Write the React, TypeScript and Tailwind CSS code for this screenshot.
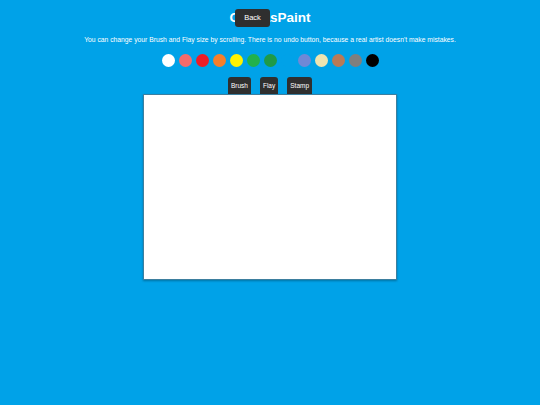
import React from "react";

const colors = [
  "#ffffff",
  "#f56b6b",
  "#ec1c27",
  "#f77f2a",
  "#fff200",
  "#22b14c",
  "#1f9a47",
  "#00a2e8",
  "#7088d6",
  "#efe4b0",
  "#b97a57",
  "#7f7f7f",
  "#000000",
];

const tools = ["Brush", "Flay", "Stamp"];

const App = () => {
  return (
    <div
      className="relative w-[540px] h-[405px] bg-[#00a2e8] flex flex-col items-center text-white"
      style={{ fontFamily: '"Liberation Sans", Arial, sans-serif' }}
    >
      <h1 className="mt-[9px] h-[18px] leading-[18px] text-[13.5px] font-bold">CanvasPaint</h1>

      {/* Back button sits over the title */}
      <button className="absolute left-[235px] top-[9px] w-[35px] h-[18px] rounded-[3px] bg-[#2f2f2f] text-[7.5px] font-normal text-white">
        Back
      </button>

      <p className="mt-[8px] text-[6.75px] leading-[10px]">
        You can change your Brush and Flay size by scrolling. There is no undo button, because a real artist doesn't make mistakes.
      </p>

      <div className="mt-[9px] flex gap-[4px]">
        {colors.map((c) => (
          <div key={c} className="w-[13px] h-[13px] rounded-full" style={{ backgroundColor: c }} />
        ))}
      </div>

      <div className="mt-[10px] flex gap-[9px]">
        {tools.map((t) => (
          <button
            key={t}
            className="h-[17px] px-[3px] rounded-t-[3px] bg-[#2f2f2f] text-[6.5px] font-normal text-white"
          >
            {t}
          </button>
        ))}
      </div>

      <div className="w-[254px] h-[186px] bg-white border border-[#3d7f9f] shadow-[0_1px_2px_rgba(0,0,0,0.3)]" />
    </div>
  );
};

export default App;
